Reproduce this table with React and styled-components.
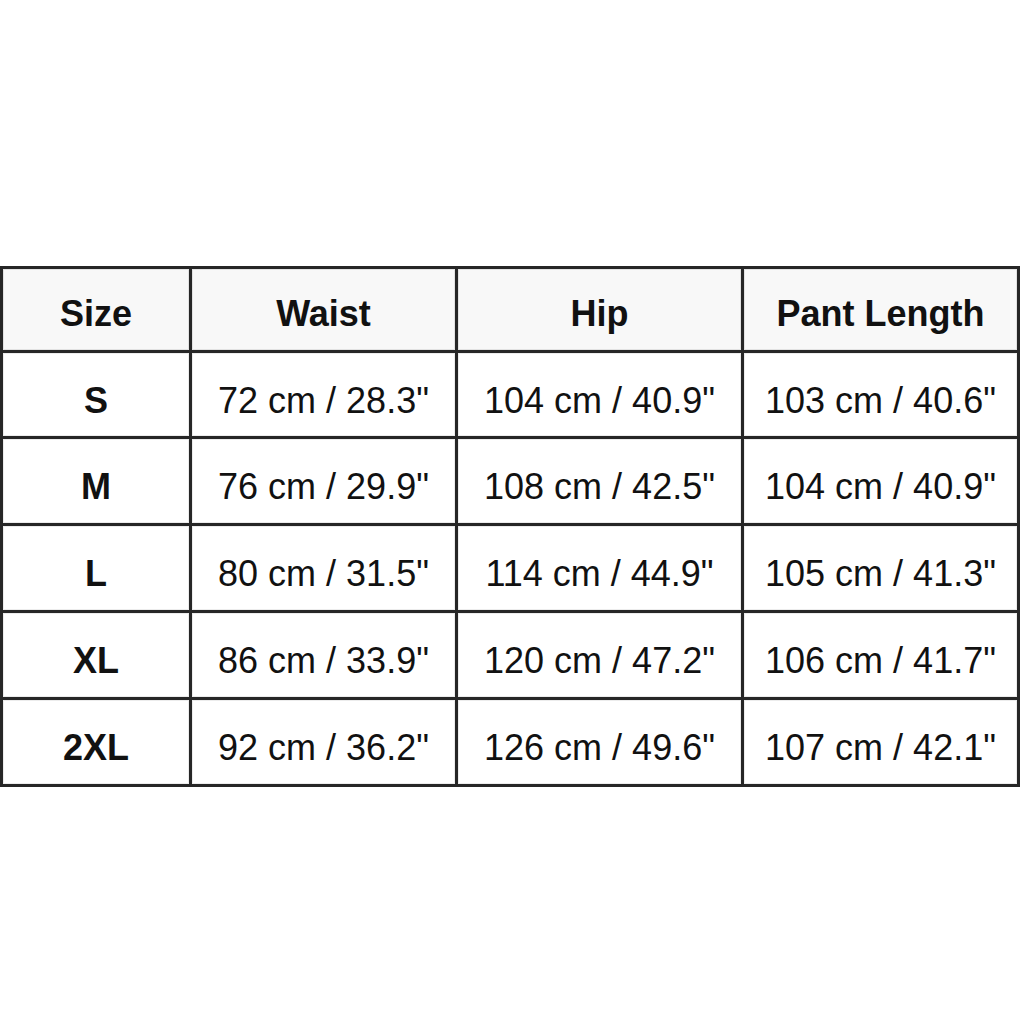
import React from "react";
import styled, { createGlobalStyle } from "styled-components";

const Global = createGlobalStyle`
  html, body { margin: 0; padding: 0; background: #ffffff; }
  body { font-family: "Liberation Sans", Arial, sans-serif; }
`;

const Page = styled.div`
  width: 1024px;
  height: 1024px;
  background: #ffffff;
  padding-top: 266px;
  box-sizing: border-box;
`;

const Table = styled.div`
  display: grid;
  grid-template-columns: 186px 263px 283px 273px;
  grid-template-rows: 81px 83px 84px 84px 84px 84px;
  gap: 3px;
  padding: 3px;
  width: 1020px;
  box-sizing: border-box;
  background: #262626;
`;

const Cell = styled.div`
  display: flex;
  align-items: center;
  justify-content: center;
  background: ${(p) => (p.$head ? "#f8f8f8" : "#ffffff")};
  box-shadow: inset 0 0 0 1px ${(p) => (p.$head ? "#e2e2e2" : "#ececec")};
  color: #111111;
  font-family: "Liberation Sans", Arial, sans-serif;
  font-size: 36px;
  font-weight: ${(p) => (p.$bold ? 700 : 400)};
  padding-top: ${(p) => (p.$head ? "8px" : "12px")};
  box-sizing: border-box;
  white-space: nowrap;
`;

const headers = ["Size", "Waist", "Hip", "Pant Length"];
const rows = [
  ["S", '72 cm / 28.3"', '104 cm / 40.9"', '103 cm / 40.6"'],
  ["M", '76 cm / 29.9"', '108 cm / 42.5"', '104 cm / 40.9"'],
  ["L", '80 cm / 31.5"', '114 cm / 44.9"', '105 cm / 41.3"'],
  ["XL", '86 cm / 33.9"', '120 cm / 47.2"', '106 cm / 41.7"'],
  ["2XL", '92 cm / 36.2"', '126 cm / 49.6"', '107 cm / 42.1"'],
];

export default function App() {
  return (
    <Page>
      <Global />
      <Table>
        {headers.map((h) => (
          <Cell key={h} $head $bold>
            {h}
          </Cell>
        ))}
        {rows.map((r) =>
          r.map((c, i) => (
            <Cell key={r[0] + i} $bold={i === 0}>
              {c}
            </Cell>
          ))
        )}
      </Table>
    </Page>
  );
}
